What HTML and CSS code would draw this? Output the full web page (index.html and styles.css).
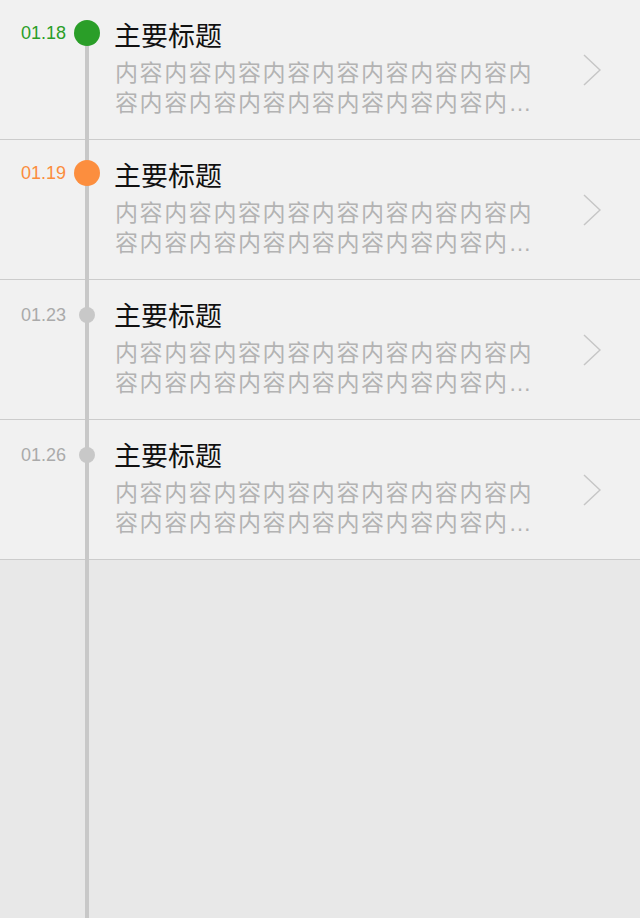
FILE: index.html
```html
<!DOCTYPE html>
<html lang="zh-CN">
<head>
<meta charset="utf-8">
<title>Timeline</title>
<link rel="stylesheet" href="styles.css">
</head>
<body>
<div class="timeline">
  <div class="item">
    <div class="marker"><span class="date green">01.18</span><span class="dot dot-green"></span></div>
    <div class="body">
      <div class="title">主要标题</div>
      <div class="desc">内容内容内容内容内容内容内容内容内容内容内容内容内容内容内容内容内容内容内容内容</div>
    </div>
    <svg class="chev" width="18" height="32" viewBox="0 0 18 32"><path d="M1 1 L17 16 L1 31" fill="none" stroke="#c6c6c6" stroke-width="1.5"/></svg>
  </div>
  <div class="item">
    <div class="marker"><span class="date orange">01.19</span><span class="dot dot-orange"></span></div>
    <div class="body">
      <div class="title">主要标题</div>
      <div class="desc">内容内容内容内容内容内容内容内容内容内容内容内容内容内容内容内容内容内容内容内容</div>
    </div>
    <svg class="chev" width="18" height="32" viewBox="0 0 18 32"><path d="M1 1 L17 16 L1 31" fill="none" stroke="#c6c6c6" stroke-width="1.5"/></svg>
  </div>
  <div class="item past">
    <div class="marker"><span class="date">01.23</span><span class="dot dot-small"></span></div>
    <div class="body">
      <div class="title">主要标题</div>
      <div class="desc">内容内容内容内容内容内容内容内容内容内容内容内容内容内容内容内容内容内容内容内容</div>
    </div>
    <svg class="chev" width="18" height="32" viewBox="0 0 18 32"><path d="M1 1 L17 16 L1 31" fill="none" stroke="#c6c6c6" stroke-width="1.5"/></svg>
  </div>
  <div class="item past">
    <div class="marker"><span class="date">01.26</span><span class="dot dot-small"></span></div>
    <div class="body">
      <div class="title">主要标题</div>
      <div class="desc">内容内容内容内容内容内容内容内容内容内容内容内容内容内容内容内容内容内容内容内容</div>
    </div>
    <svg class="chev" width="18" height="32" viewBox="0 0 18 32"><path d="M1 1 L17 16 L1 31" fill="none" stroke="#c6c6c6" stroke-width="1.5"/></svg>
  </div>
</div>
</body>
</html>
```
FILE: styles.css
```css
html, body {
  margin: 0;
  padding: 0;
  background: #e8e8e8;
}
body {
  font-family: "Liberation Sans", "Noto Sans CJK SC", sans-serif;
}
.timeline {
  position: relative;
  min-height: 100vh;
}
.timeline::before {
  content: "";
  position: absolute;
  left: 85px;
  top: 33px;
  bottom: 0;
  width: 4px;
  background: #c8c8c8;
}
.item {
  display: flex;
  height: 140px;
  box-sizing: border-box;
  border-bottom: 1px solid #cccccc;
  background: #f1f1f1;
}
.marker {
  width: 100px;
  height: 26px;
  margin-top: 20px;
  display: flex;
  align-items: center;
  justify-content: flex-end;
  gap: 8px;
  flex: none;
}
.past .marker {
  margin-top: 22px;
}
.date {
  font-family: "Liberation Sans", sans-serif;
  font-size: 18px;
  color: #aaaaaa;
}
.date.green { color: #2a9e28; }
.date.orange { color: #fb8d3d; }
.dot {
  position: relative;
  width: 26px;
  height: 26px;
  border-radius: 50%;
  flex: none;
}
.dot-green { background: #2a9e28; }
.dot-orange { background: #fc8e3e; }
.dot-small {
  width: 16px;
  height: 16px;
  margin: 0 5px;
  background: #c8c8c8;
}
.body {
  margin-left: 15px;
  width: 430px;
  padding-top: 20px;
  flex: none;
}
.title {
  margin-left: -1px;
  font-family: "Noto Sans CJK SC", sans-serif;
  font-size: 27px;
  line-height: 30px;
  color: #111111;
}
.desc {
  margin-top: 8px;
  font-family: "Liberation Sans", "Noto Sans CJK SC", sans-serif;
  font-size: 23px;
  letter-spacing: 1.6px;
  line-height: 30px;
  color: #b3b3b3;
  display: -webkit-box;
  -webkit-box-orient: vertical;
  -webkit-line-clamp: 2;
  overflow: hidden;
}
.chev {
  flex: none;
  align-self: center;
  margin-left: auto;
  margin-right: 39px;
}
```
